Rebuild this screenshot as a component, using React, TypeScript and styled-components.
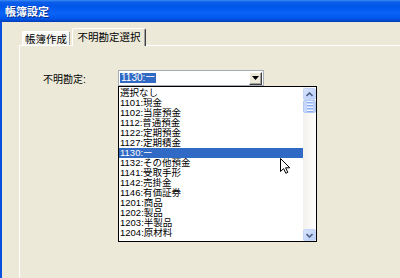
import styled, { createGlobalStyle } from 'styled-components'

const GlobalStyle = createGlobalStyle`
  body {
    margin: 0;
    background: #ece9d8;
    overflow: hidden;
  }
`

const uiFont = `'Liberation Sans', 'Noto Sans CJK JP', sans-serif`

const items = [
  '選択なし',
  '1101:現金',
  '1102:当座預金',
  '1112:普通預金',
  '1122:定期預金',
  '1127:定期積金',
  '1130:ー',
  '1132:その他預金',
  '1141:受取手形',
  '1142:売掛金',
  '1146:有価証券',
  '1201:商品',
  '1202:製品',
  '1203:半製品',
  '1204:原材料',
]

const selectedIndex = 6

const App = () => {
  return (
    <>
      <GlobalStyle />
      <Window>
        <TitleBar>帳簿設定</TitleBar>
        <Client>
          <TabStrip>
            <Tab width={48}>帳簿作成</Tab>
            <Tab width={74} active>
              不明勘定選択
            </Tab>
          </TabStrip>
          <Panel>
            <Row>
              <Label>不明勘定:</Label>
              <ComboWrap>
                <ComboBox>
                  <ComboValue>1130:ー</ComboValue>
                  <DropButton>
                    <svg width="7" height="4" viewBox="0 0 7 4">
                      <path d="M0 0h7L3.5 4z" fill="#000" />
                    </svg>
                  </DropButton>
                </ComboBox>
                <DropList>
                  <Items>
                    {items.map((item, i) => (
                      <Item key={item} selected={i === selectedIndex}>
                        {item}
                      </Item>
                    ))}
                  </Items>
                  <ScrollBar>
                    <ScrollButton>
                      <svg width="7" height="5" viewBox="0 0 7 5">
                        <path d="M0.5 4L3.5 1L6.5 4" fill="none" stroke="#4d6185" strokeWidth="1.6" />
                      </svg>
                    </ScrollButton>
                    <Thumb>
                      <Grip />
                      <Grip />
                      <Grip />
                      <Grip />
                    </Thumb>
                    <Track />
                    <ScrollButton>
                      <svg width="7" height="5" viewBox="0 0 7 5">
                        <path d="M0.5 1L3.5 4L6.5 1" fill="none" stroke="#4d6185" strokeWidth="1.6" />
                      </svg>
                    </ScrollButton>
                  </ScrollBar>
                  <Cursor width="11" height="16" viewBox="0 0 11 16">
                    <path
                      d="M0.5 0.5V13.5L3.6 10.6L5.8 15.3L7.8 14.4L5.6 9.8H9.8Z"
                      fill="#fff"
                      stroke="#000"
                      strokeWidth="1"
                      strokeLinejoin="round"
                    />
                  </Cursor>
                </DropList>
              </ComboWrap>
            </Row>
          </Panel>
        </Client>
      </Window>
    </>
  )
}

export default App

const Window = styled.div`
  width: 400px;
  height: 278px;
  display: flex;
  flex-direction: column;
  border-left: 2px solid #0b4fe0;
  box-sizing: border-box;
  font-family: ${uiFont};
`

const TitleBar = styled.div`
  height: 22px;
  margin-left: -2px;
  padding-left: 5px;
  display: flex;
  align-items: center;
  color: #fff;
  font-size: 11px;
  font-weight: bold;
  background: linear-gradient(
    to bottom,
    #3d8cf7 0px,
    #0c5fe9 2px,
    #0056e9 6px,
    #0a63f7 13px,
    #0058ee 18px,
    #0047cc 21px,
    #003aa8 22px
  );
  text-shadow: 1px 1px 0 #0a2e8a;
`

const Client = styled.div`
  flex: 1;
  display: flex;
  flex-direction: column;
  padding: 6px 0 0 17px;
  background: #ece9d8;
`

const TabStrip = styled.div`
  display: flex;
  align-items: flex-end;
  padding-left: 3px;
  height: 17px;
  position: relative;
  z-index: 1;
`

const Tab = styled.div<{ active?: boolean; width: number }>`
  box-sizing: border-box;
  width: ${({ width }) => width}px;
  height: ${({ active }) => (active ? '18px' : '14px')};
  margin-bottom: ${({ active }) => (active ? '-1px' : '0')};
  margin-left: ${({ active }) => (active ? '2px' : '0')};
  padding-top: ${({ active }) => (active ? '2px' : '1px')};
  text-align: center;
  font-size: 10.5px;
  line-height: 13px;
  white-space: nowrap;
  color: #000;
  border-top: 1px solid #fff;
  border-left: 1px solid #fff;
  border-right: 1px solid ${({ active }) => (active ? '#404040' : '#a0a0a0')};
  border-top-left-radius: 2px;
  border-top-right-radius: 2px;
  background: ${({ active }) => (active ? '#ece9d8' : 'linear-gradient(#fdfdfb, #f3f2ec)')};
  box-shadow: ${({ active }) => (active ? 'inset -1px 0 0 #a0a0a0' : 'none')};
`

const Panel = styled.div`
  flex: 1;
  border-top: 1px solid #fff;
  border-left: 1px solid #fff;
  padding: 24px 0 0 23px;
`

const Row = styled.div`
  display: flex;
  align-items: center;
`

const Label = styled.div`
  width: 75px;
  font-size: 10px;
  color: #000;
`

const ComboWrap = styled.div`
  position: relative;
`

const ComboBox = styled.div`
  box-sizing: border-box;
  width: 146px;
  height: 16px;
  display: flex;
  align-items: center;
  justify-content: space-between;
  background: #fff;
  border: 1px solid #a5acb5;
  padding: 0 1px 0 1px;
`

const ComboValue = styled.span`
  background: #316ac5;
  color: #fff;
  font-size: 10px;
  line-height: 10px;
  padding: 0 1px;
`

const DropButton = styled.div`
  box-sizing: border-box;
  width: 13px;
  height: 13px;
  display: flex;
  align-items: center;
  justify-content: center;
  background: #ece9d8;
  border-top: 1px solid #fff;
  border-left: 1px solid #fff;
  border-right: 1px solid #404040;
  border-bottom: 1px solid #404040;
  box-shadow: inset -1px -1px 0 #a0a0a0;
`

const DropList = styled.div`
  position: absolute;
  left: 0;
  top: 16px;
  box-sizing: border-box;
  width: 199px;
  height: 156px;
  display: flex;
  background: #fff;
  border: 1px solid #000;
`

const Items = styled.div`
  flex: 1;
  padding-top: 1px;
  display: flex;
  flex-direction: column;
`

const Item = styled.div<{ selected?: boolean }>`
  height: 10px;
  line-height: 10px;
  font-size: 9.5px;
  padding-left: 1px;
  white-space: nowrap;
  overflow: hidden;
  color: ${({ selected }) => (selected ? '#fff' : '#000')};
  background: ${({ selected }) => (selected ? '#316ac5' : 'transparent')};
`

const ScrollBar = styled.div`
  width: 13px;
  display: flex;
  flex-direction: column;
  background: linear-gradient(to right, #f3f1ec, #fefefe);
`

const ScrollButton = styled.div`
  box-sizing: border-box;
  width: 13px;
  height: 12px;
  margin-top: 1px;
  display: flex;
  align-items: center;
  justify-content: center;
  background: linear-gradient(to bottom right, #d8e4fd, #b8cdf8);
  border: 1px solid #c6d6fb;
  border-radius: 2px;
`

const Thumb = styled.div`
  box-sizing: border-box;
  width: 13px;
  height: 13px;
  display: flex;
  flex-direction: column;
  align-items: center;
  justify-content: center;
  gap: 1px;
  background: linear-gradient(to right, #c9d8fc, #bccff8);
  border: 1px solid #b4c8f6;
  border-radius: 2px;
`

const Grip = styled.div`
  width: 6px;
  height: 1px;
  background: #eef3fe;
  border-bottom: 1px solid #8cb0f8;
`

const Track = styled.div`
  flex: 1;
`

const Cursor = styled.svg`
  position: absolute;
  left: 161px;
  top: 71px;
`
